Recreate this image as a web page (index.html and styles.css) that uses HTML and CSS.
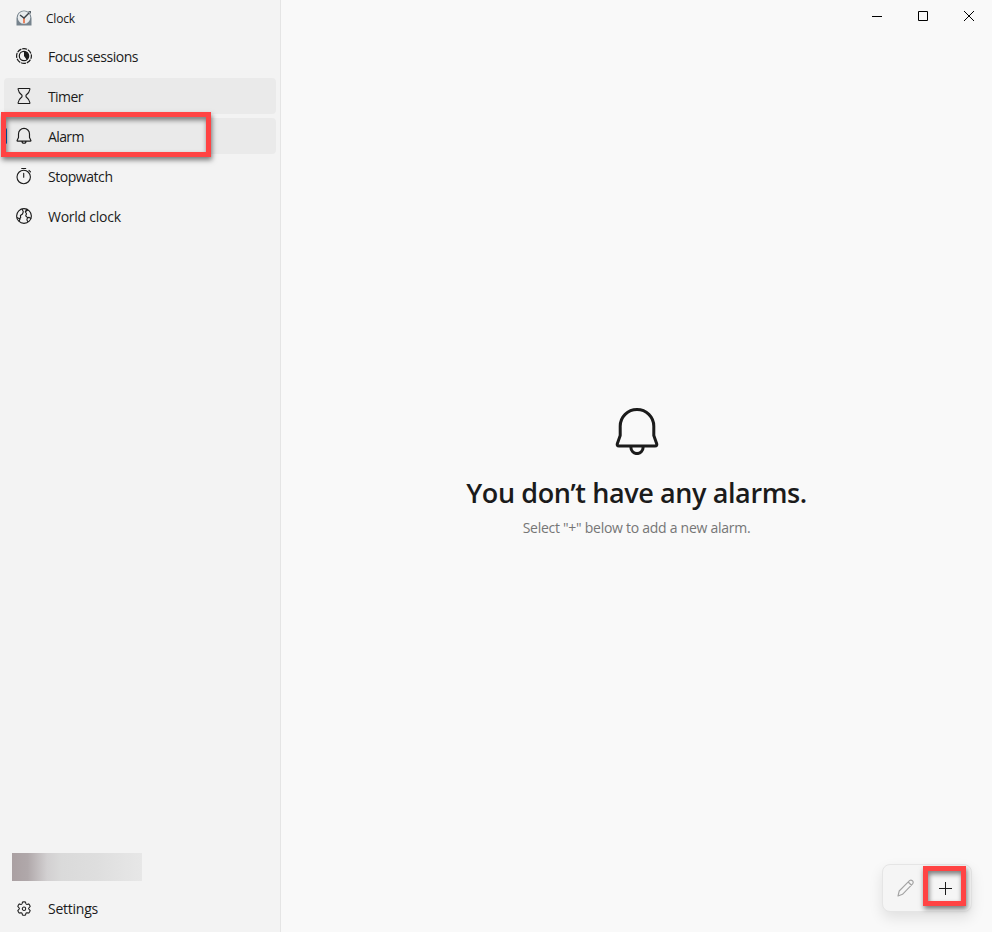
FILE: index.html
```html
<!DOCTYPE html>
<html lang="en">
<head>
<meta charset="utf-8">
<title>Clock</title>
<link rel="stylesheet" href="styles.css">
</head>
<body>
<div class="app">
  <aside class="sidebar">
    <div class="brand">
      <svg class="icon" viewBox="0 0 16 16">
        <path d="M0.5 8a7.500 7.500 0 0 1 15 0v7.500h-15z" fill="#76838d"/>
        <path d="M12 1h3v3z" fill="#59636b"/>
        <circle cx="8" cy="7.500" r="6.300" fill="#e8ebed"/>
        <path d="M7 8h2v5.300H7z" fill="#e8825f"/>
        <path d="M4 5l4 3 5-5" fill="none" stroke="#3b4248" stroke-width="1.400"/>
      </svg>
      <span>Clock</span>
    </div>
    <nav class="nav">
      <a class="item focus">
        <svg class="icon" viewBox="0 0 16 16" fill="none" stroke="#1b1b1b">
          <circle cx="8" cy="8" r="7.400" stroke-width="1.200" stroke-dasharray="4.900 .91" stroke-dashoffset="2"/>
          <circle cx="8" cy="8" r="4.700" stroke-width="1.200"/>
          <path d="M8 3.500a4.500 4.500 0 0 1 2.700 8.200L8 8z" fill="#1b1b1b" stroke="none"/>
        </svg>
        <span>Focus sessions</span>
      </a>
      <a class="item timer hover">
        <svg class="icon" viewBox="0 0 16 16" fill="none" stroke="#1b1b1b" stroke-width="1.100" stroke-linejoin="round">
          <path d="M2.800.5h10.400q.8 0 .7.800c-.3 3-1.500 4.100-3.900 6v1.400c2.400 1.900 3.600 3 3.900 6q.1.800-.7.800H2.800q-.8 0-.7-.8c.3-3 1.500-4.100 3.900-6V7.300c-2.400-1.900-3.600-3-3.900-6q-.1-.8.700-.8z"/>
        </svg>
        <span>Timer</span>
      </a>
      <a class="item alarm selected">
        <svg class="icon" viewBox="0 0 16 16" fill="none" stroke="#1b1b1b" stroke-width="1.150" stroke-linejoin="round">
          <path d="M8 .4a5.500 5.500 0 0 0-5.500 5.500v3.600L1.100 12.500q-.2.600.4.600h13q.6 0 .4-.6L13.500 9.500V5.900A5.500 5.500 0 0 0 8 .4zM6 13.200a2 2 0 0 0 4 0"/>
        </svg>
        <span>Alarm</span>
      </a>
      <a class="item stopwatch">
        <svg class="icon" viewBox="0 0 16 16" fill="none" stroke="#1b1b1b" stroke-width="1.100" stroke-linecap="round">
          <circle cx="7.700" cy="9" r="6.700"/><path d="M5.700.5h4M7.700 5.300v3.900M13 2.400l1.500 1.500"/>
        </svg>
        <span>Stopwatch</span>
      </a>
      <a class="item world">
        <svg class="icon" viewBox="0 0 16 16" fill="none" stroke="#1b1b1b" stroke-width="1.100" stroke-linejoin="round">
          <circle cx="8" cy="8" r="7.400"/>
          <path d="M.8 9.500l2.700 1.200 1.200-1.200-.3-2L6.500 6 7.300 3.800 6 1M3 13.200l1.300-2.700M10.700 1.200L9.300 3.700l1.200 2-.8 2.200 1.800 1.700 1.700-.2 2 1M11.500 9.600l-.6 2.100.9 2.200M9.300 3.700l2.500-1.600"/>
        </svg>
        <span>World clock</span>
      </a>
    </nav>
    <div class="account"></div>
    <a class="item settings">
      <svg class="icon" viewBox="0 0 16 16" fill="none" stroke="#1b1b1b" stroke-width="1.050" stroke-linejoin="round">
        <path d="M6.500 1.100q1.500-.5 3 0l.4 1.600q.2.700 1 .7l1.800-.5q1 1.100 1.500 2.600l-1.300 1.400q-.6.600 0 1.300l1.300 1.400q-.5 1.500-1.500 2.500l-1.800-.4q-.8 0-1 .7l-.4 1.700q-1.500.4-3 0l-.4-1.700q-.2-.7-1-.7l-1.800.4q-1-1-1.500-2.500l1.300-1.400q.6-.7 0-1.300L1.800 5.500q.5-1.500 1.500-2.600l1.800.5q.8 0 1-.7z"/>
        <circle cx="8" cy="7.700" r="1.700"/>
      </svg>
      <span>Settings</span>
    </a>
  </aside>
  <main class="content">
    <header class="caption">
      <svg viewBox="0 0 10 10"><path d="M0 5.500h10"/></svg>
      <svg viewBox="0 0 10 10"><path d="M.5.5h9v9h-9z"/></svg>
      <svg viewBox="0 0 10 10"><path d="M0 0l10 10M10 0L0 10"/></svg>
    </header>
    <section class="empty">
      <svg class="bell" viewBox="0 0 44 48" fill="none" stroke="#1b1b1b" stroke-width="3" stroke-linejoin="round">
        <path d="M22 2.500A16.800 16.800 0 0 0 5.200 19.300v9.200L2.400 36.500q-.8 2.500 1.600 2.500h36q2.400 0 1.600-2.500l-2.800-8v-9.200A16.800 16.800 0 0 0 22 2.500zM15.900 40.500a6.100 6.100 0 0 0 12.200 0"/>
      </svg>
      <h1>You don’t have any alarms.</h1>
      <p>Select "+" below to add a new alarm.</p>
    </section>
    <div class="commands">
      <svg class="pencil" viewBox="0 0 18 18" fill="none" stroke="#a3a3a3" stroke-width="1.100" stroke-linejoin="round">
        <path d="M1 17l1.200-5L12.500 1.700q1.400-1.200 2.900 0 1.500 1.500.2 3.100L5.500 15.300zM11.200 3l3.500 3.500"/>
      </svg>
      <svg class="plus" viewBox="0 0 13 13"><path d="M0 6.500h13M6.500 0v13"/></svg>
      <span class="mark mark-add"></span>
    </div>
  </main>
  <span class="mark mark-alarm"></span>
</div>
</body>
</html>
```
FILE: styles.css
```css
* { box-sizing: border-box; }
body { margin: 0; font: 14px/20px "Open Sans", "Noto Sans", sans-serif; color: #1b1b1b; }
.app { position: relative; display: flex; width: 992px; height: 932px; background: #f9f9f9; overflow: hidden; }
.sidebar { width: 281px; background: #f3f3f3; border-right: 1px solid #e5e5e5; display: flex; flex-direction: column; padding: 0 4px 5px; }
.icon { width: 16px; height: 16px; flex: none; overflow: visible; }
.brand { height: 36px; display: flex; align-items: center; gap: 14px; padding-left: 12px; font-size: 12px; letter-spacing: -.2px; }
.brand span { padding-top: 2px; }
.nav { display: flex; flex-direction: column; gap: 4px; padding-top: 2px; }
.item { height: 36px; display: flex; align-items: center; gap: 16px; padding-left: 12px; border-radius: 4px; letter-spacing: -.45px; }
.item span { padding-top: 2px; }
.timer, .alarm { letter-spacing: -.6px; }
.world, .settings { letter-spacing: -.25px; }
.settings span { padding-top: 0; }
.hover, .selected { background: #eaeaea; }
.selected { position: relative; }
.selected::before { content: ""; position: absolute; left: 0; top: 10px; width: 3px; height: 16px; border-radius: 2px; background: #0067c0; }
.account { width: 130px; height: 28px; margin: auto 0 10px 8px; background: linear-gradient(90deg, #aaa0a2 0, #b0a8aa 12%, #d2d0d1 27%, #dadada 38%, #dedede 65%, #e7e7e7 100%); }
.content { position: relative; flex: 1; display: flex; flex-direction: column; }
.caption { height: 32px; display: flex; justify-content: flex-end; align-items: center; gap: 36px; padding-right: 18px; }
.caption svg { width: 10px; height: 10px; overflow: visible; fill: none; stroke: #000; stroke-width: 1; }
.empty { padding-top: 375px; display: flex; flex-direction: column; align-items: center; }
.bell { width: 44px; height: 48px; }
h1 { margin: 20px 0 0; font-size: 27px; line-height: 36px; font-weight: 600; letter-spacing: -.4px; white-space: nowrap; }
p { margin: 7px 0 0; color: #767676; letter-spacing: -.27px; white-space: nowrap; }
.commands { position: absolute; right: 20px; bottom: 20px; width: 90px; height: 48px; display: flex; align-items: center; gap: 24px; padding-left: 14px; background: #f5f5f5; border: 1px solid #e5e5e5; border-radius: 8px; box-shadow: 0 6px 14px rgba(0,0,0,.1); }
.pencil { width: 18px; height: 18px; }
.plus { width: 13px; height: 13px; stroke: #1b1b1b; stroke-width: 1; }
.mark { position: absolute; border: 5px solid #ff4343; box-shadow: 1px 3px 5px rgba(0,0,0,.5), inset 1px 3px 5px rgba(0,0,0,.5); }
.mark-alarm { left: 1px; top: 112px; width: 210px; height: 45px; }
.mark-add { left: 40px; top: 1px; width: 43px; height: 40px; }
```
